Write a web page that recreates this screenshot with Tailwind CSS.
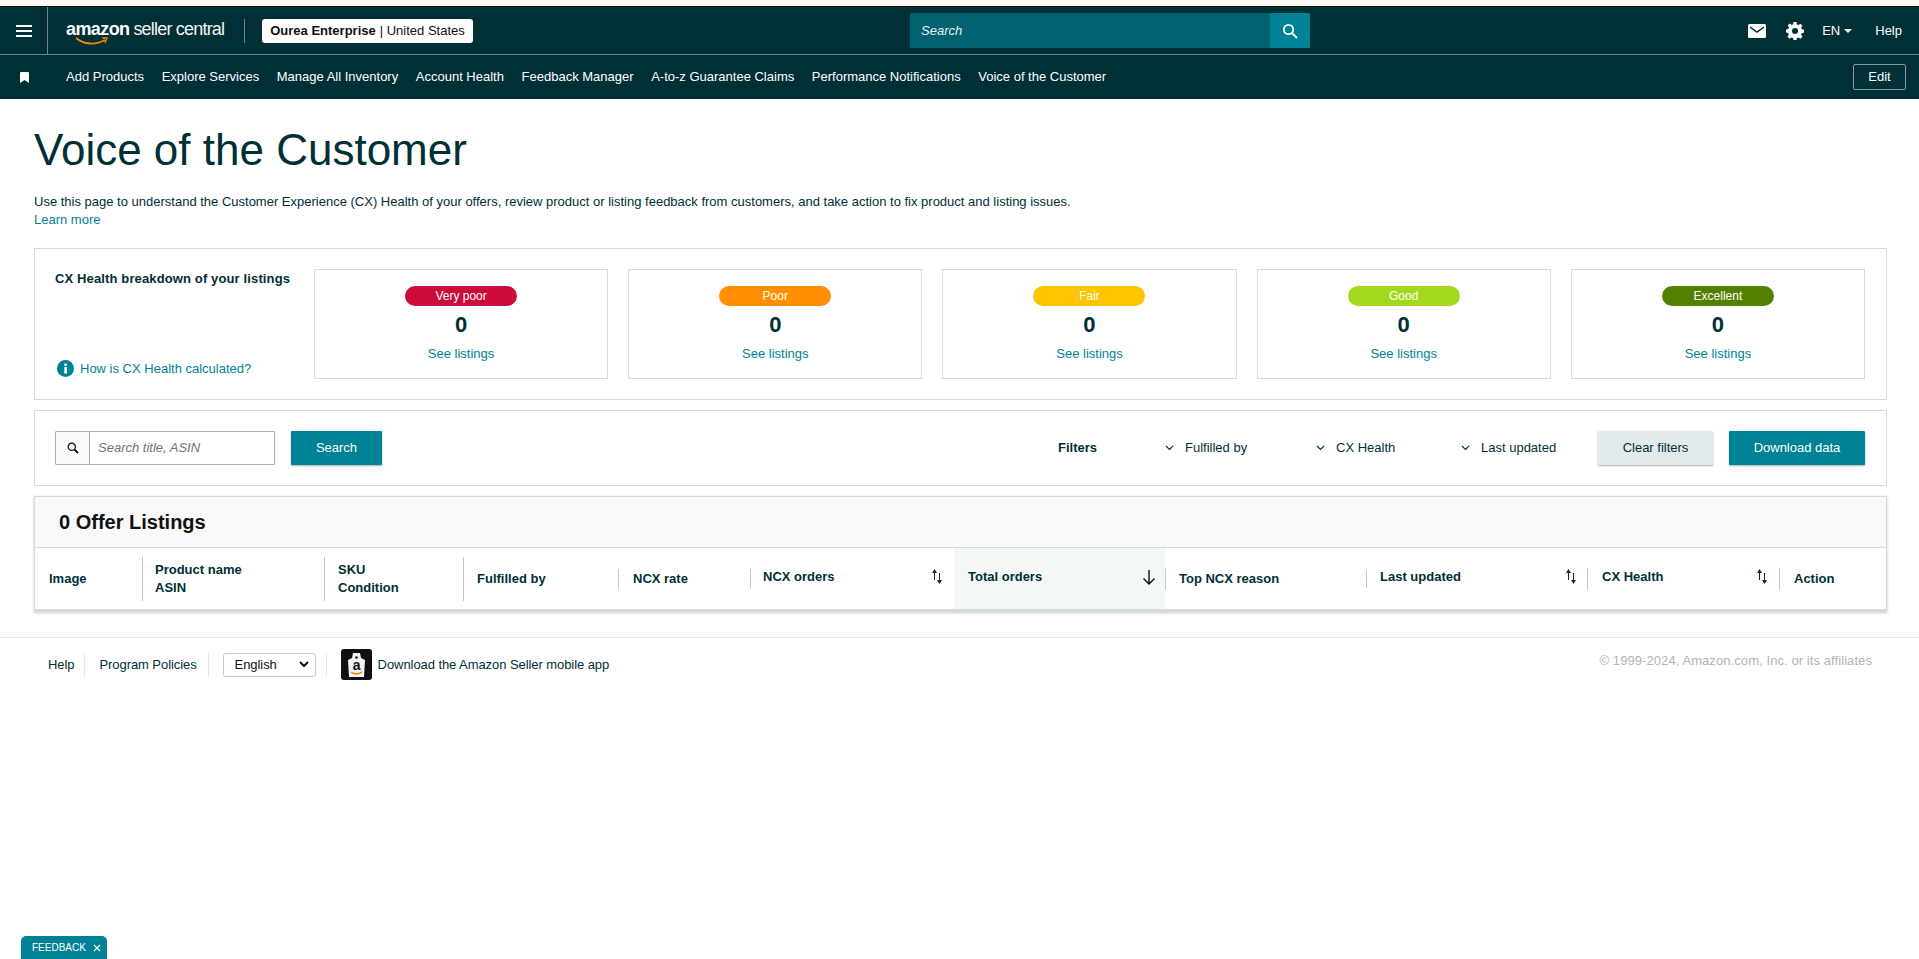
<!DOCTYPE html>
<html lang="en">
<head>
  <meta charset="UTF-8" />
  <title>Voice of the Customer</title>
  <script src="https://cdn.jsdelivr.net/npm/@tailwindcss/browser@4"></script>
</head>
<body class="bg-white text-[#002f36] font-['Liberation_Sans',Arial,sans-serif] text-[13px] h-[959px] overflow-hidden relative">

  <!-- top bars -->
  <div class="h-[6px] bg-[#fff8f3]"></div>
  <div class="h-[1px] bg-[#0f1111]"></div>
  <header class="h-[48px] bg-[#002f36] border-b border-[#6f8589] flex items-center text-white">
    <div class="w-[48px] h-full border-r border-[#6f8589] flex items-center justify-center">
      <svg width="16" height="12" viewBox="0 0 16 12" fill="white"><rect y="0" width="16" height="2"/><rect y="5" width="16" height="2"/><rect y="10" width="16" height="2"/></svg>
    </div>
    <div class="ml-[18px] w-[177px] relative h-[30px] flex items-center whitespace-nowrap tracking-[-0.6px]">
      <span class="font-bold text-[18px] -mt-[3px]">amazon</span><span class="text-[18px] ml-[4px] -mt-[3px] text-[#f2f5f5] tracking-[-0.8px]">seller central</span>
      <svg class="absolute left-[9px] top-[21px]" width="34" height="9" viewBox="0 0 34 9" fill="none"><path d="M1 1c8 7 20 7 29 2" stroke="#f08804" stroke-width="1.8"/><path d="M27 1h5l-2 5" stroke="#f08804" stroke-width="1.4"/></svg>
    </div>
    <div class="w-px h-[24px] bg-[#6f8589] ml-[1px]"></div>
    <div class="ml-[17px] w-[211px] h-[24px] bg-white rounded-[3px] text-[#0f1111] flex items-center justify-center whitespace-nowrap">
      <span class="font-bold">Ourea Enterprise</span><span class="ml-[4px]">| United States</span>
    </div>
    <div class="ml-[437px] w-[400px] h-[35px] flex">
      <div class="flex-1 bg-[#00626f] italic text-[#e6f0f1] flex items-center pl-[11px]">Search</div>
      <div class="w-[40px] bg-[#008296] flex items-center justify-center">
        <svg width="16" height="16" viewBox="0 0 16 16" fill="none" stroke="white" stroke-width="1.8"><circle cx="6.5" cy="6.5" r="4.7"/><path d="M10 10l5 5"/></svg>
      </div>
    </div>
    <div class="ml-auto flex items-center pr-[17px]">
      <svg width="18" height="14" viewBox="0 0 18 14"><rect width="18" height="14" rx="1.5" fill="white"/><path d="M2 3l7 5 7-5" fill="none" stroke="#002f36" stroke-width="1.5"/></svg>
      <svg class="ml-[20px]" width="18" height="18" viewBox="0 0 18 18"><path fill="white" d="M7.5 0h3l.4 2.4 1.5.7 2-1.4 2.1 2.1-1.4 2 .7 1.5 2.2.4v3l-2.2.4-.7 1.6 1.4 2-2.1 2.1-2-1.4-1.5.7-.4 2.4h-3l-.4-2.4-1.6-.7-2 1.4-2.1-2.1 1.4-2-.7-1.6L0 10.500v-3l2.400-.4.700-1.500-1.400-2 2.100-2.100 2 1.400 1.300-.7z"/><circle cx="9" cy="9" r="3" fill="#002f36"/></svg>
      <span class="ml-[18px]">EN</span>
      <span class="ml-[4px] w-0 h-0 border-x-[4px] border-x-transparent border-t-[4px] border-t-white"></span>
      <span class="ml-[23px]">Help</span>
    </div>
  </header>
  <nav class="h-[44px] bg-[#002f36] flex items-center text-white pr-[13px]">
    <div class="w-[66px] flex justify-center pr-[18px]">
      <svg width="9" height="11" viewBox="0 0 9 11" fill="white"><path d="M0 1a1 1 0 011-1h7a1 1 0 011 1v10L4.500 8 0 11z"/></svg>
    </div>
    <div class="flex gap-[17.6px] whitespace-nowrap">
      <span>Add Products</span>
      <span>Explore Services</span>
      <span>Manage All Inventory</span>
      <span>Account Health</span>
      <span>Feedback Manager</span>
      <span>A-to-z Guarantee Claims</span>
      <span>Performance Notifications</span>
      <span>Voice of the Customer</span>
    </div>
    <button class="ml-auto w-[53px] h-[26px] border border-[#8a9a9d] rounded-[2px]">Edit</button>
  </nav>

  <main class="px-[34px]">
    <h1 class="text-[44px] leading-[52px] mt-[25px]">Voice of the Customer</h1>
    <p class="mt-[17px] leading-[18px]">Use this page to understand the Customer Experience (CX) Health of your offers, review product or listing feedback from customers, and take action to fix product and listing issues.</p>
    <a class="block leading-[18px] text-[#008296]">Learn more</a>

    <!-- CX Health breakdown -->
    <section class="mt-[19px] h-[152px] w-[1853px] border border-[#d5dbdb] flex pl-[20px] pr-[21px] pt-[20px]">
      <div class="w-[259px] h-[110px] flex flex-col justify-between pb-[1px]">
        <div class="font-bold tracking-[0.13px]">CX Health breakdown of your listings</div>
        <div class="flex items-center text-[#008296] pl-[2px]">
          <svg width="17" height="17" viewBox="0 0 17 17"><circle cx="8.500" cy="8.500" r="8.500" fill="#008296"/><rect x="7.300" y="7" width="2.600" height="6.500" fill="white"/><rect x="7.300" y="3.500" width="2.600" height="2.400" fill="white"/></svg>
          <span class="ml-[6px]">How is CX Health calculated?</span>
        </div>
      </div>
      <div class="flex-1 grid grid-cols-5 gap-[20px] h-[110px]">
        <div class="border border-[#d5dbdb] flex flex-col items-center pt-[16px]">
          <span class="w-[112px] h-[20px] rounded-full bg-[#cc0c39] text-white text-[12px] flex items-center justify-center">Very poor</span>
          <b class="text-[22px] leading-[26px] mt-[6px]">0</b>
          <a class="text-[#008296] mt-[6px]">See listings</a>
        </div>
        <div class="border border-[#d5dbdb] flex flex-col items-center pt-[16px]">
          <span class="w-[112px] h-[20px] rounded-full bg-[#ff8f00] text-white text-[12px] flex items-center justify-center">Poor</span>
          <b class="text-[22px] leading-[26px] mt-[6px]">0</b>
          <a class="text-[#008296] mt-[6px]">See listings</a>
        </div>
        <div class="border border-[#d5dbdb] flex flex-col items-center pt-[16px]">
          <span class="w-[112px] h-[20px] rounded-full bg-[#ffc400] text-white text-[12px] flex items-center justify-center">Fair</span>
          <b class="text-[22px] leading-[26px] mt-[6px]">0</b>
          <a class="text-[#008296] mt-[6px]">See listings</a>
        </div>
        <div class="border border-[#d5dbdb] flex flex-col items-center pt-[16px]">
          <span class="w-[112px] h-[20px] rounded-full bg-[#a4d81c] text-white text-[12px] flex items-center justify-center">Good</span>
          <b class="text-[22px] leading-[26px] mt-[6px]">0</b>
          <a class="text-[#008296] mt-[6px]">See listings</a>
        </div>
        <div class="border border-[#d5dbdb] flex flex-col items-center pt-[16px]">
          <span class="w-[112px] h-[20px] rounded-full bg-[#538000] text-white text-[12px] flex items-center justify-center">Excellent</span>
          <b class="text-[22px] leading-[26px] mt-[6px]">0</b>
          <a class="text-[#008296] mt-[6px]">See listings</a>
        </div>
      </div>
    </section>

    <!-- search and filters -->
    <section class="mt-[10px] h-[76px] w-[1853px] border border-[#d5dbdb] flex items-center pl-[20px] pr-[21px]">
      <div class="w-[220px] h-[34px] border border-[#a6b2b2] rounded-[1px] flex">
        <div class="w-[34px] bg-[#f9fafa] border-r border-[#a6b2b2] flex items-center justify-center">
          <svg width="12" height="12" viewBox="0 0 12 12" fill="none" stroke="#0f1111"><circle cx="4.800" cy="4.800" r="3.600" stroke-width="1.200"/><path d="M7.500 7.500l3.500 3.500" stroke-width="1.800"/></svg>
        </div>
        <div class="flex-1 italic text-[#6f7373] flex items-center pl-[8px]">Search title, ASIN</div>
      </div>
      <button class="ml-[16px] w-[91px] h-[34px] bg-[#008296] text-white rounded-[1px] shadow-[0_1px_2px_#00000055]">Search</button>
      <b class="ml-auto w-[107px] -mt-[1px]">Filters</b>
      <div class="flex items-center w-[150px]">
        <svg width="9" height="6" viewBox="0 0 9 6" fill="none" stroke="#002f36" stroke-width="1.100"><path d="M1 1l3.500 3.500L8 1"/></svg>
        <span class="ml-[11px]">Fulfilled by</span>
      </div>
      <div class="flex items-center w-[145px] pl-[1px]">
        <svg width="9" height="6" viewBox="0 0 9 6" fill="none" stroke="#002f36" stroke-width="1.100"><path d="M1 1l3.500 3.500L8 1"/></svg>
        <span class="ml-[11px]">CX Health</span>
      </div>
      <div class="flex items-center w-[138px] pl-[1px]">
        <svg width="9" height="6" viewBox="0 0 9 6" fill="none" stroke="#002f36" stroke-width="1.100"><path d="M1 1l3.500 3.500L8 1"/></svg>
        <span class="ml-[11px]">Last updated</span>
      </div>
      <button class="w-[115px] h-[34px] bg-[#e3eaeb] rounded-[1px] shadow-[0_1px_2px_#00000055]">Clear filters</button>
      <button class="ml-[16px] w-[136px] h-[34px] bg-[#008296] text-white rounded-[1px] shadow-[0_1px_2px_#00000055]">Download data</button>
    </section>

    <!-- listings table -->
    <section class="mt-[10px] w-[1853px] border border-[#d5dbdb] border-b-[3px] shadow-[0_1px_3px_#00000033]">
      <div class="h-[51px] bg-[#f9f9f9] border-b border-[#d5dbdb] flex items-center pl-[24px] font-bold text-[20px] text-[#0f1111]">0 Offer Listings</div>
      <div class="h-[61px] grid grid-cols-[107px_182px_139px_155px_132px_204px_211px_201px_221px_192px_1fr] font-bold leading-[18px]">
        <div class="flex items-center pl-[14px] pt-[1px]">Image</div>
        <div class="flex items-center"><div class="border-l border-[#c0c8c8] h-[44px] pl-[12px] flex flex-col justify-center">Product name<span>ASIN</span></div></div>
        <div class="flex items-center"><div class="border-l border-[#c0c8c8] h-[44px] pl-[13px] flex flex-col justify-center">SKU<span>Condition</span></div></div>
        <div class="flex items-center"><div class="border-l border-[#c0c8c8] h-[44px] pl-[13px] flex items-center pt-[1px]">Fulfilled by</div></div>
        <div class="flex items-center"><div class="border-l border-[#c0c8c8] h-[20px] pl-[14px] flex items-center pt-[1px]">NCX rate</div></div>
        <div class="flex items-center"><div class="border-l border-[#c0c8c8] h-[20px] pl-[12px] pb-[4px] flex items-center w-full">NCX orders
          <svg class="ml-auto mr-[12px]" width="10" height="15" viewBox="0 0 10 15" fill="none" stroke="#002f36"><path d="M2.500 11V2"/><path d="M2.500 0L5 4H0z" fill="#002f36" stroke="none"/><path d="M7.500 4v9"/><path d="M7.500 15L10 11H5z" fill="#002f36" stroke="none"/></svg></div></div>
        <div class="flex items-center bg-[#f3f7f7] pl-[14px] pr-[9px] pb-[4px]">Total orders
          <svg class="ml-auto" width="14" height="16" viewBox="0 0 14 16" fill="none" stroke="#0f1111" stroke-width="1.400"><path d="M7 1v14M1.500 9.500L7 15l5.500-5.500"/></svg></div>
        <div class="flex items-center"><div class="border-l border-[#c0c8c8] h-[22px] pl-[13px] flex items-center pt-[1px]">Top NCX reason</div></div>
        <div class="flex items-center"><div class="border-l border-[#c0c8c8] h-[18px] pl-[13px] pb-[4px] flex items-center w-full">Last updated
          <svg class="ml-auto mr-[11px]" width="10" height="15" viewBox="0 0 10 15" fill="none" stroke="#002f36"><path d="M2.500 11V2"/><path d="M2.500 0L5 4H0z" fill="#002f36" stroke="none"/><path d="M7.500 4v9"/><path d="M7.500 15L10 11H5z" fill="#002f36" stroke="none"/></svg></div></div>
        <div class="flex items-center"><div class="border-l border-[#c0c8c8] h-[22px] pl-[14px] pb-[4px] flex items-center w-full">CX Health
          <svg class="ml-auto mr-[12px]" width="10" height="15" viewBox="0 0 10 15" fill="none" stroke="#002f36"><path d="M2.500 11V2"/><path d="M2.500 0L5 4H0z" fill="#002f36" stroke="none"/><path d="M7.500 4v9"/><path d="M7.500 15L10 11H5z" fill="#002f36" stroke="none"/></svg></div></div>
        <div class="flex items-center"><div class="border-l border-[#c0c8c8] h-[22px] pl-[14px] flex items-center pt-[1px]">Action</div></div>
      </div>
    </section>
  </main>

  <!-- footer -->
  <footer class="mt-[25px] border-t border-[#e8eaea] h-[54px] flex items-center pl-[48px] pr-[47px] tracking-[-0.07px]">
    <span>Help</span>
    <span class="w-px h-[24px] bg-[#e8eaea] ml-[10px]"></span>
    <span class="ml-[14px]">Program Policies</span>
    <span class="w-px h-[24px] bg-[#e8eaea] ml-[11px]"></span>
    <div class="ml-[14px] w-[93px] h-[24px] border border-[#c4cccc] rounded-[3px] flex items-center pl-[11px] pr-[6px] text-[#0f1111]">English
      <svg class="ml-auto" width="10" height="7" viewBox="0 0 10 7" fill="none" stroke="#0f1111" stroke-width="2"><path d="M1 1l4 4 4-4"/></svg>
    </div>
    <span class="w-px h-[24px] bg-[#e8eaea] ml-[10px]"></span>
    <div class="ml-[14px] w-[31px] h-[31px] bg-[#0f1111] rounded-[3px] flex items-center justify-center">
      <svg width="19" height="26" viewBox="0 0 19 26"><path fill="#f3f3f3" d="M6 1h7l1 5 4 2-1 17H2L1 8l4-2z"/><circle cx="9.500" cy="5.500" r="1.300" fill="#0f1111"/><text x="9.500" y="18" text-anchor="middle" font-size="14" font-weight="700" font-family="Liberation Sans" fill="#0f1111">a</text><path d="M4 20c3 2.500 7 2.500 11 0" fill="none" stroke="#f08804" stroke-width="1.500"/></svg>
    </div>
    <span class="ml-[6px]">Download the Amazon Seller mobile app</span>
    <span class="ml-auto -mt-[8px] text-[#aab7b8] tracking-[0.08px]">© 1999-2024, Amazon.com, Inc. or its affiliates</span>
  </footer>

  <!-- feedback tab -->
  <div class="absolute left-[21px] bottom-0 w-[86px] h-[23px] bg-[#008296] rounded-t-[5px] text-white text-[10px] flex items-center pl-[11px]">FEEDBACK
    <svg class="ml-[7px]" width="8" height="8" viewBox="0 0 8 8" fill="none" stroke="white" stroke-width="1.200"><path d="M1 1l6 6M7 1L1 7"/></svg>
  </div>
</body>
</html>
